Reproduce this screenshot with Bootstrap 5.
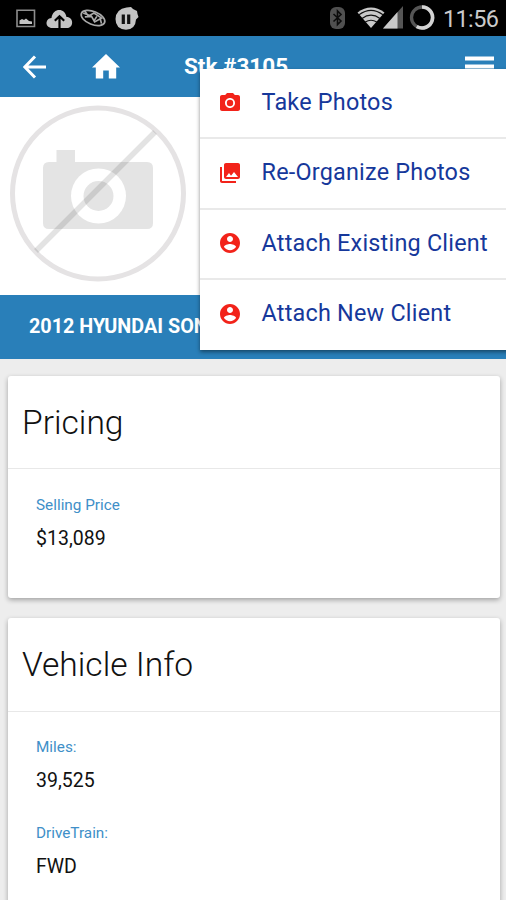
<!DOCTYPE html>
<html lang="en">
<head>
<meta charset="utf-8">
<meta name="viewport" content="width=device-width, initial-scale=1">
<title>Stk #3105</title>
<link href="https://cdn.jsdelivr.net/npm/bootstrap@5.3.0/dist/css/bootstrap.min.css" rel="stylesheet">
<style>
  body { font-family: Roboto, "Noto Sans", sans-serif; background: #ededed; height: 900px; color: #111; }
  svg { display: block; flex: none; }
  .statusbar { height: 36px; background: #000; color: #c4c4c4; }
  .clock { font-size: 23.4px; letter-spacing: -.6px; line-height: 36px; padding-top: 1px; color: #cacaca; width: 55px; }
  .appbar, .vehicle-title { background: #297fb9; color: #fff; }
  .appbar { height: 61px; }
  .back-icon { margin-left: 23px; }
  .home-icon { margin-left: 43px; }
  .menu-icon { margin-right: 12px; }
  .appbar-title { font-size: 22.5px; font-weight: 700; line-height: 61px; margin-left: 64px; }
  .photo { height: 198px; background: #fff; }
  .vehicle-title { height: 64px; font-size: 19.8px; font-weight: 700; line-height: 63px; padding-left: 29px; }
  .app-menu { left: 200px; top: 69px; width: 320px; height: 281px; box-shadow: 0 2px 4px rgba(0,0,0,.45); z-index: 10; }
  .menu-row { height: 70.3px; padding-left: 20px; gap: 21.5px; font-size: 23.4px; letter-spacing: .22px; color: #16389b; border-bottom: 2px solid #e9e9e9; padding-bottom: 1px; }
  .menu-row:last-child { border-bottom: 0; padding-bottom: 3px; }
  .menu-row svg { fill: #f2231a; }
  .panel { border: 0; border-radius: 3px; width: 491.5px; margin-left: 8px; box-shadow: 0 2px 5px rgba(0,0,0,.32); }
  .panel-head { height: 93px; font-size: 33.6px; font-weight: 300; line-height: 93px; padding-left: 14px; border-bottom: 1px solid #e8e8e8; }
  .panel-body { padding: 23px 0 0 28px; }
  .field { height: 86px; }
  .field dt { font-size: 15.3px; font-weight: 400; line-height: 26px; color: #408fc8; }
  .field dd { font-size: 19.5px; line-height: 30px; margin: 6px 0 0; }
  .pricing { height: 222px; margin-top: 17px; }
  .info { height: 290px; margin-top: 20px; }
  .info .panel-head { height: 94px; }
  .info .panel-body { padding-top: 22px; }
</style>
</head>
<body class="m-0 overflow-hidden position-relative">
<header>
  <div class="statusbar d-flex align-items-center justify-content-between ps-3 pe-2">
    <svg width="125" height="36" viewBox="0 0 125 36" fill="none">
      <path d="M1 10.200H18.500V26.500H1Z" stroke="#8d8d8d" stroke-width="1.600"/>
      <path d="M3.500 24V20.500L6 19L8 20L10 18.500L13 21L16 21.500V24Z" fill="#c4c4c4"/>
      <path d="M36.500 28C28.500 28 29 18.500 35.500 18C37 7.500 49 7.500 50.500 17C58 17 58 28 51 28Z" fill="#c4c4c4"/>
      <path d="M43.500 28V17M38.800 20.800L43.500 16.300L48.200 20.800" stroke="#000" stroke-width="2.200"/>
      <g transform="rotate(22 77 18)" stroke="#aaa" stroke-width="1.700"><ellipse cx="77" cy="18" rx="12.500" ry="6.500"/><path d="M66 14L72 18L76 13L86 15M69 20L75 17L80 21L84 16L87 20M66 17H73M80 15L79 20"/></g>
      <path d="M110.500 7.500L115 7L117 9L121 11L121.500 14L122.500 17L120 19.500Q119.500 29.300 110 29.800Q99.500 29 99.500 19Q100 9 110.500 7.500Z" fill="#c4c4c4"/>
      <path d="M107.300 14.500V24M112.700 14.500V24" stroke="#111" stroke-width="3.200"/>
    </svg>
    <div class="d-flex align-items-center">
      <svg width="113" height="36" viewBox="330 0 113 36" fill="none">
        <rect x="330" y="7" width="15" height="22" rx="6" fill="#505050"/>
        <path d="M333.500 14L341 21L337.500 24.500V11L341 14.500L333.500 21.500" stroke="#0b0b0b" stroke-width="1.600"/>
        <path d="M357.500 12.500Q371 2.500 384.500 12.500L371 28Z" fill="#c9c9c9"/>
        <path d="M359 14.800Q371 6 383 14.800M362 18.400Q371 12 380 18.400M365.200 22Q371 18.500 376.800 22" stroke="#111" stroke-width="1.200"/>
        <path d="M383 28.500L403 6V28.500Z" fill="#555"/>
        <path d="M383 28.500L397.500 12V28.500Z" fill="#c9c9c9"/>
        <circle cx="422" cy="17.500" r="10.500" stroke="#555" stroke-width="3.300"/>
        <path d="M422 7A10.500 10.500 0 1 1 416.700 26.500" stroke="#d3d3d3" stroke-width="3.600"/>
      </svg>
      <div class="clock">11:56</div>
    </div>
  </div>
  <nav class="appbar d-flex align-items-center">
    <svg width="26" height="26" viewBox="0 0 26 26" class="back-icon" fill="none" stroke="#fff" stroke-width="3"><path d="M12 2.500L1.800 13L12 23.500M2 13H23"/></svg>
    <svg width="28" height="26" viewBox="0 0 28 26" fill="#fff" class="home-icon"><path d="M14 0L28 13.500H24.200V24.500H16.800V16.500H11.200V24.500H3.800V13.500H0Z"/></svg>
    <div class="appbar-title">Stk #3105</div>
    <svg width="29" height="26" viewBox="0 0 29 26" class="menu-icon ms-auto" fill="#fff"><path d="M0 2.500H29V6.500H0ZM0 10.500H29V14.500H0ZM0 18.500H29V22.500H0Z"/></svg>
  </nav>
</header>
<main>
  <div class="photo">
    <svg width="200" height="198" viewBox="0 97 200 198">
      <path d="M43 168Q43 162 49 162H56.500V150H75V162H147Q153 162 153 168V223Q153 229 147 229H49Q43 229 43 223Z" fill="#e4e4e4"/>
      <circle cx="98.500" cy="196" r="27.500" fill="#fff"/><circle cx="98.500" cy="196" r="15" fill="#e4e4e4"/>
      <circle cx="98" cy="193.500" r="85.500" fill="none" stroke="#e5e3e4" stroke-width="5"/>
      <path d="M36 251L155 132" stroke="#000" stroke-opacity=".11" stroke-width="5.500"/>
    </svg>
  </div>
  <div class="vehicle-title text-nowrap">2012 HYUNDAI SONATA</div>
  <section class="card panel pricing">
    <h2 class="panel-head m-0">Pricing</h2>
    <dl class="panel-body m-0">
      <div class="field"><dt>Selling Price</dt><dd>$13,089</dd></div>
    </dl>
  </section>
  <section class="card panel info">
    <h2 class="panel-head m-0">Vehicle Info</h2>
    <dl class="panel-body m-0">
      <div class="field"><dt>Miles:</dt><dd>39,525</dd></div>
      <div class="field"><dt>DriveTrain:</dt><dd>FWD</dd></div>
    </dl>
  </section>
</main>
<div class="app-menu position-absolute bg-white">
  <div class="menu-row d-flex align-items-center"><svg width="20" height="20" viewBox="2 2 20 20"><circle cx="12" cy="12" r="3.200"/><path d="M9 2L7.170 4H4c-1.100 0-2 .9-2 2v12c0 1.100.9 2 2 2h16c1.100 0 2-.9 2-2V6c0-1.100-.9-2-2-2h-3.170L15 2H9zm3 15c-2.760 0-5-2.240-5-5s2.240-5 5-5 5 2.240 5 5-2.240 5-5 5z"/></svg><span>Take Photos</span></div>
  <div class="menu-row d-flex align-items-center"><svg width="20" height="20" viewBox="2 2 20 20"><path d="M22 16V4c0-1.100-.9-2-2-2H8c-1.100 0-2 .9-2 2v12c0 1.100.9 2 2 2h12c1.100 0 2-.9 2-2zm-11-4l2.030 2.710L16 11l4 5H8l3-4zM2 6v14c0 1.100.9 2 2 2h14v-2H4V6H2z"/></svg><span>Re-Organize Photos</span></div>
  <div class="menu-row d-flex align-items-center"><svg width="20" height="20" viewBox="2 2 20 20"><path d="M12 2C6.480 2 2 6.480 2 12s4.480 10 10 10 10-4.480 10-10S17.520 2 12 2zm0 3c1.660 0 3 1.340 3 3s-1.340 3-3 3-3-1.340-3-3 1.340-3 3-3zm0 14.200c-2.500 0-4.710-1.280-6-3.220.03-1.990 4-3.080 6-3.080 1.990 0 5.970 1.090 6 3.080-1.290 1.940-3.500 3.220-6 3.220z"/></svg><span>Attach Existing Client</span></div>
  <div class="menu-row d-flex align-items-center"><svg width="20" height="20" viewBox="2 2 20 20"><path d="M12 2C6.480 2 2 6.480 2 12s4.480 10 10 10 10-4.480 10-10S17.520 2 12 2zm0 3c1.660 0 3 1.340 3 3s-1.340 3-3 3-3-1.340-3-3 1.340-3 3-3zm0 14.200c-2.500 0-4.710-1.280-6-3.220.03-1.990 4-3.080 6-3.080 1.990 0 5.970 1.090 6 3.080-1.290 1.940-3.500 3.220-6 3.220z"/></svg><span>Attach New Client</span></div>
</div>
<script src="https://cdn.jsdelivr.net/npm/bootstrap@5.3.0/dist/js/bootstrap.bundle.min.js"></script>
</body>
</html>
